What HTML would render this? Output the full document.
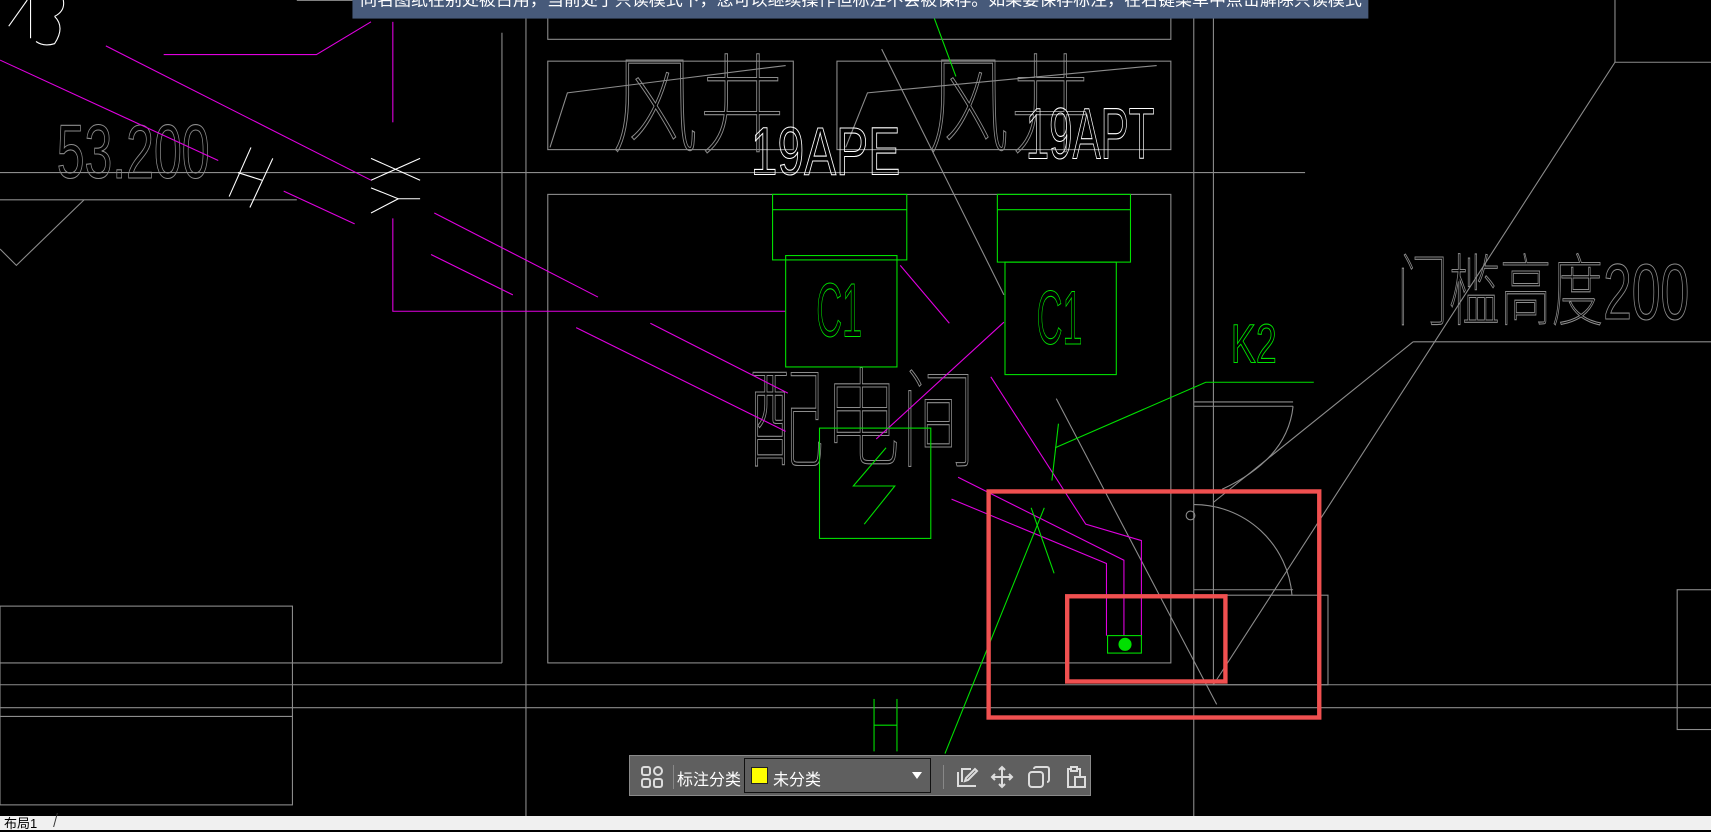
<!DOCTYPE html>
<html><head><meta charset="utf-8"><style>
html,body{margin:0;padding:0;background:#000;width:1711px;height:830px;overflow:hidden;font-family:"Liberation Sans","Noto Sans CJK SC",sans-serif}
svg{position:absolute;left:0;top:0}
.tb{position:absolute;left:629px;top:755px;width:462px;height:41px;background:#5f5f5f;border:1px solid #8a8a8a;box-sizing:border-box}
.tb .t{position:absolute;color:#fff;font-size:16px;top:10px}
.dd{position:absolute;left:744px;top:758px;width:187px;height:35px;border:1px solid #111;box-sizing:border-box;background:#5f5f5f}
.bot{position:absolute;left:0;top:816px;width:1711px;height:14px;background:#f0f0f0}
</style></head><body>
<svg width="1711" height="830" viewBox="0 0 1568 760" preserveAspectRatio="none">
<g stroke="#8c8c8c" stroke-width="1" fill="none">
<line x1="460" y1="30" x2="460" y2="607"/><line x1="0" y1="607" x2="460" y2="607"/>
<line x1="482" y1="0" x2="482" y2="748"/><line x1="1094" y1="0" x2="1094" y2="748"/><line x1="1112" y1="0" x2="1112" y2="627"/>
<rect x="502" y="0" width="571" height="36"/>
<rect x="502" y="56" width="225" height="81"/><rect x="767" y="56" width="306" height="81"/>
<line x1="0" y1="158" x2="1196" y2="158"/>
<rect x="502" y="178" width="571" height="429"/>
<line x1="0" y1="627" x2="1568" y2="627"/><line x1="0" y1="648" x2="1568" y2="648"/>
<rect x="0" y="555" width="268" height="182"/><line x1="0" y1="656" x2="268" y2="656"/>
<line x1="0" y1="183" x2="272" y2="183"/><polyline points="77,183 15,243 0,228"/>
<polyline points="1480,0 1480,57 1568,57"/><line x1="1480" y1="57" x2="1112" y2="627"/>
<line x1="1295" y1="313" x2="1568" y2="313"/><line x1="1295" y1="313" x2="1112" y2="460"/>
<rect x="1537" y="540" width="40" height="128"/>
<line x1="808" y1="45" x2="920" y2="270"/><line x1="968" y1="365" x2="1115" y2="645"/>
<rect x="1094" y="545" width="123" height="82"/><line x1="1094" y1="540" x2="1185" y2="540"/>
<line x1="1094" y1="368" x2="1185" y2="368"/><line x1="1094" y1="372" x2="1185" y2="372"/>
<path d="M1185 372 Q1180 420 1120 448"/>
<path d="M1094 462 A90 90 0 0 1 1184 545"/>
<circle cx="1091" cy="472" r="4"/>
<polyline points="504,135 520,85 720,60"/><polyline points="775,135 795,85 1060,60"/>
</g>
<g fill="none" stroke="#8c8c8c" stroke-width="1" font-family="Liberation Sans,Noto Sans CJK SC,sans-serif" font-weight="100">
<text x="560" y="132" font-size="100" textLength="160" lengthAdjust="spacingAndGlyphs">风井</text>
<text x="850" y="132" font-size="100" textLength="150" lengthAdjust="spacingAndGlyphs">风井</text>
<text x="685" y="420" font-size="100" textLength="210" lengthAdjust="spacingAndGlyphs">配电间</text>
<text x="1280" y="292" font-size="72" textLength="268" lengthAdjust="spacingAndGlyphs">门槛高度200</text>
<text x="52" y="163" font-size="70" textLength="140" lengthAdjust="spacingAndGlyphs">53.200</text>
</g>
<g fill="none" stroke="#fff" stroke-width="1">
<text x="688" y="160" font-size="62" textLength="137" lengthAdjust="spacingAndGlyphs">19APE</text>
<text x="940" y="145" font-size="66" textLength="118" lengthAdjust="spacingAndGlyphs">19APT</text>
<polyline points="340,145 385,165"/><polyline points="340,165 385,145"/><polyline points="340,172 365,182 340,195"/><line x1="365" y1="182" x2="385" y2="182"/>
<line x1="230" y1="135" x2="210" y2="180"/><line x1="250" y1="145" x2="229" y2="190"/><line x1="218" y1="158" x2="240" y2="165"/>
<line x1="272" y1="0" x2="323" y2="0"/>
<path d="M8 24 L25 0 M28 0 L28 35 M50 15 Q60 10 58 0 M50 15 Q60 25 50 40 Q40 43 33 38"/>
</g>
<g stroke="#e000e0" stroke-width="1" fill="none">
<polyline points="150,50 290,50 340,20"/>
<line x1="0" y1="55" x2="200" y2="147"/><line x1="97" y1="42" x2="340" y2="165"/>
<line x1="260" y1="175" x2="325" y2="205"/>
<line x1="360" y1="20" x2="360" y2="112"/><polyline points="360,200 360,285 720,285"/>
<line x1="398" y1="195" x2="548" y2="272"/><line x1="395" y1="233" x2="470" y2="270"/>
<line x1="596" y1="296" x2="722" y2="360"/><line x1="528" y1="300" x2="720" y2="395"/>
<line x1="825" y1="243" x2="870" y2="296"/><line x1="920" y1="295" x2="803" y2="402"/>
<polyline points="908,345 995,480 1046,495 1046,582"/>
<polyline points="878,437 1030,513 1030,582"/>
<polyline points="872,457 1014,516 1014,582"/>
</g>
<g stroke="#00e000" stroke-width="1" fill="none">
<rect x="708" y="178" width="123" height="60"/><line x1="708" y1="192" x2="831" y2="192"/>
<rect x="720" y="234" width="102" height="102"/>
<rect x="914" y="178" width="122" height="62"/><line x1="914" y1="192" x2="1036" y2="192"/>
<rect x="921" y="240" width="102" height="103"/>
<rect x="751" y="392" width="102" height="101"/>
<polyline points="812,410 782,445 820,445 792,480"/>
<polyline points="1204,350 1105,350 967,410"/><line x1="970" y1="388" x2="964" y2="440"/>
<line x1="957" y1="465" x2="866" y2="690"/><line x1="945" y1="465" x2="966" y2="525"/>
<rect x="1015" y="582" width="31" height="16"/>
<line x1="850" y1="0" x2="876" y2="70"/>
<text x="1128" y="332" font-size="50" textLength="42" lengthAdjust="spacingAndGlyphs">K2</text>
<text x="748" y="308" font-size="70" textLength="42" lengthAdjust="spacingAndGlyphs">C1</text>
<text x="950" y="315" font-size="70" textLength="42" lengthAdjust="spacingAndGlyphs">C1</text>
<line x1="801" y1="640" x2="801" y2="688"/><line x1="822" y1="640" x2="822" y2="688"/><line x1="801" y1="664" x2="822" y2="664"/>
</g>
<circle cx="1031" cy="590" r="6" fill="#00e000"/>
<g stroke="#f05050" stroke-width="4" fill="none">
<rect x="906" y="450" width="303" height="207"/>
<rect x="978" y="546" width="145" height="78"/>
</g>
<rect x="323" y="0" width="931" height="17" fill="#475a7a"/>
<text x="330" y="5" font-size="15" fill="#fff" textLength="918" lengthAdjust="spacingAndGlyphs">同名图纸在别处被占用，当前处于只读模式下，您可以继续操作但标注不会被保存。如果要保存标注，在右键菜单中点击解除只读模式</text>
</svg>
<div class="tb">
<svg style="left:10px;top:9px" width="24" height="24" viewBox="0 0 24 24" fill="none" stroke="#ddd" stroke-width="2"><rect x="2" y="2" width="8" height="8" rx="2"/><rect x="14" y="2" width="8" height="8" rx="4" transform="rotate(45 18 6)"/><rect x="2" y="14" width="8" height="8" rx="2"/><rect x="14" y="14" width="8" height="8" rx="2"/></svg>
<div style="position:absolute;left:43px;top:9px;width:1px;height:24px;background:#888"></div>
<div class="t" style="left:47px">标注分类</div>
<div style="position:absolute;left:313px;top:9px;width:1px;height:24px;background:#888"></div>
<svg style="left:325px;top:9px" width="24" height="24" viewBox="0 0 24 24" fill="none" stroke="#ddd" stroke-width="2"><path d="M3 7v14h18M7 17V4h9M20 4l-9 9-1 3 3-1 9-9z"/></svg>
<svg style="left:360px;top:9px" width="24" height="24" viewBox="0 0 24 24" fill="none" stroke="#ddd" stroke-width="2"><path d="M12 2v20M2 12h20M9 5l3-3 3 3M9 19l3 3 3-3M5 9l-3 3 3 3M19 9l3 3-3 3"/></svg>
<svg style="left:397px;top:9px" width="24" height="24" viewBox="0 0 24 24" fill="none" stroke="#ddd" stroke-width="2"><rect x="2" y="7" width="14" height="15" rx="3"/><path d="M7 4a2 2 0 0 1 2-2h11a2 2 0 0 1 2 2v11a2 2 0 0 1-2 2"/></svg>
<svg style="left:433px;top:9px" width="24" height="24" viewBox="0 0 24 24" fill="none" stroke="#ddd" stroke-width="2"><path d="M14 4h3v8M8 4H5v18h7"/><rect x="8" y="2" width="6" height="4"/><rect x="12" y="12" width="10" height="10"/></svg>
</div>
<div class="dd">
<div style="position:absolute;left:6px;top:8px;width:15px;height:15px;background:#ff0;border:1px solid #222"></div>
<div style="position:absolute;left:28px;top:7px;color:#fff;font-size:16px">未分类</div>
<div style="position:absolute;right:8px;top:13px;width:0;height:0;border-left:5px solid transparent;border-right:5px solid transparent;border-top:7px solid #fff"></div>
</div>
<div class="bot"><span style="position:absolute;left:4px;top:-3px;font-size:13px;color:#000">布局1</span><span style="position:absolute;left:55px;top:-3px;width:1px;height:14px;background:#333;transform:skewX(-15deg)"></span></div>
</body></html>
